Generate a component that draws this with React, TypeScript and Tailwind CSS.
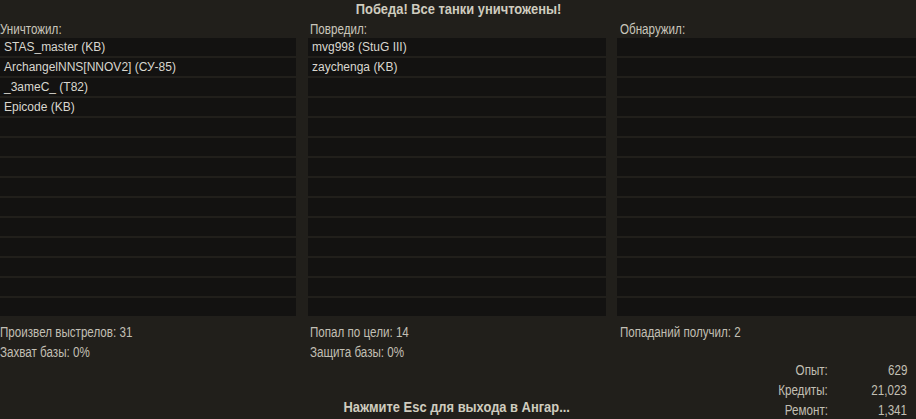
import React from "react";

const sans = { fontFamily: '"Liberation Sans", Arial, sans-serif' };

const ROWS = 14;

function N({ children, bold, center }: { children: React.ReactNode; bold?: boolean; center?: boolean }) {
  return (
    <span
      className={`inline-block whitespace-nowrap ${bold ? "font-bold scale-x-[0.86]" : "scale-x-[0.83]"} ${center ? "origin-center" : "origin-left"}`}
      style={sans}
    >
      {children}
    </span>
  );
}

function NR({ children }: { children: React.ReactNode }) {
  return (
    <span className="inline-block whitespace-nowrap scale-x-[0.83] origin-right" style={sans}>
      {children}
    </span>
  );
}

function Column({
  title,
  items,
  stats,
  pad,
  children,
  className,
}: {
  title: string;
  items: string[];
  stats: string[];
  pad: string;
  children?: React.ReactNode;
  className: string;
}) {
  const rows = Array.from({ length: ROWS }, (_, i) => items[i] ?? "");
  return (
    <div className={className}>
      <div className={`h-[20px] leading-[21px] text-[14px] text-[#c9c6bb] ${pad}`}>
        <N>{title}</N>
      </div>
      <div className="flex flex-col gap-[2px]">
        {rows.map((r, i) => (
          <div
            key={i}
            className="h-[18px] bg-[#131211] leading-[18px] text-[12px] text-[#d9d7cf] pl-[4px] whitespace-nowrap"
            style={sans}
          >
            {r}
          </div>
        ))}
      </div>
      <div className="mt-[6px] flex flex-col">
        {stats.map((s, i) => (
          <div key={i} className={`h-[20px] leading-[20px] text-[14px] text-[#c2bfb4] ${pad}`}>
            <N>{s}</N>
          </div>
        ))}
      </div>
      {children}
    </div>
  );
}

export default function App() {
  const rewards: [string, string][] = [
    ["Опыт:", "629"],
    ["Кредиты:", "21,023"],
    ["Ремонт:", "1,341"],
  ];
  return (
    <div className="w-[916px] h-[419px] overflow-hidden flex flex-col bg-[#211f1b]">
      <div className="h-[19px] leading-[17px] text-center text-[15px] text-[#cfccbf]">
        <N bold center>
          Победа! Все танки уничтожены!
        </N>
      </div>
      <div className="flex flex-1">
        <Column
          className="w-[296px] flex flex-col"
          pad=""
          title="Уничтожил:"
          items={["STAS_master (KB)", "ArchangelNNS[NNOV2] (СУ-85)", "_3ameC_ (T82)", "Epicode (KB)"]}
          stats={["Произвел выстрелов: 31", "Захват базы: 0%"]}
        />
        <Column
          className="w-[298px] ml-[12px] flex flex-col"
          pad="pl-[2px]"
          title="Повредил:"
          items={["mvg998 (StuG III)", "zaychenga (KB)"]}
          stats={["Попал по цели: 14", "Защита базы: 0%"]}
        >
          <div className="mt-[34px] h-[20px] leading-[20px] text-center text-[15px] text-[#cfccbf]">
            <N bold center>
              Нажмите Esc для выхода в Ангар...
            </N>
          </div>
        </Column>
        <Column
          className="flex-1 ml-[11px] flex flex-col"
          pad="pl-[3px]"
          title="Обнаружил:"
          items={[]}
          stats={["Попаданий получил: 2"]}
        >
          <div className="mt-[17px] flex flex-col pr-[9px]">
            {rewards.map(([l, v]) => (
              <div key={l} className="h-[20px] leading-[21px] flex justify-end text-[14px] text-[#c2bfb4]">
                <div className="text-right">
                  <NR>{l}</NR>
                </div>
                <div className="w-[79px] text-right">
                  <NR>{v}</NR>
                </div>
              </div>
            ))}
          </div>
        </Column>
      </div>
    </div>
  );
}
